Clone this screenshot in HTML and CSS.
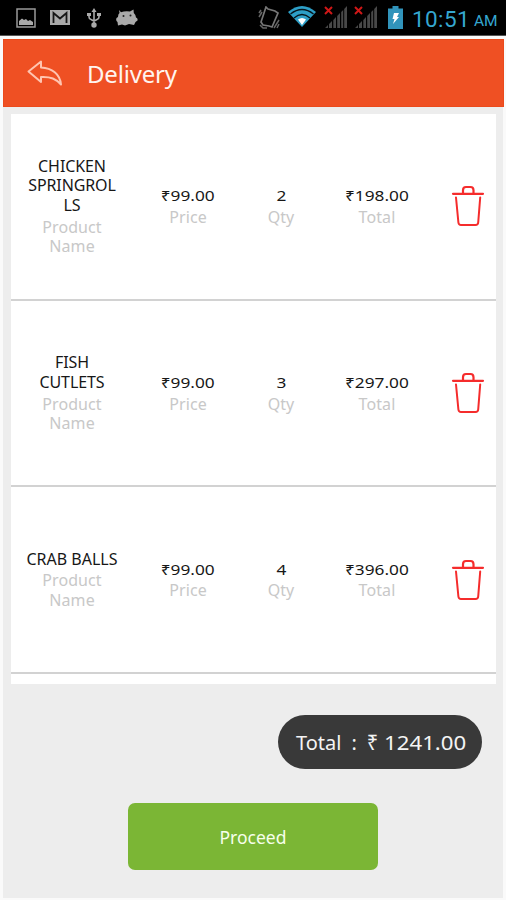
FILE: index.html
```html
<!DOCTYPE html>
<html lang="en">
<head>
<meta charset="utf-8">
<title>Delivery</title>
<link rel="stylesheet" href="styles.css">
</head>
<body>
<svg class="defs" aria-hidden="true">
  <symbol id="trash" viewBox="0 0 34 42">
    <path d="M2 8.8H32" stroke-width="2.2"/>
    <path d="M12 8V5.2Q12 2 15 2H19.5Q22.5 2 22.5 5.2V8" stroke-width="2.2"/>
    <path d="M5 12.5L7.4 37.5Q7.7 40 10 40H24.5Q27 40 27.2 37.5L29.2 12.5" stroke-width="2"/>
  </symbol>
  <symbol id="signal" viewBox="0 0 24 24">
    <path d="M1 22L4 19V22ZM5 18L8 15V22H5ZM9.3 14L12 11V22H9.3ZM13.2 10L16 7V22H13.2ZM17.2 6L19.2 4V22H17.2ZM20.2 3L23 0V22H20.2Z" fill="#484848"/>
    <path d="M1 1L8 8M8 1L1 8" stroke="#cf1717" stroke-width="2"/>
  </symbol>
</svg>
<div class="status">
  <svg class="s-image" viewBox="0 0 20 20"><path d="M1 1H19V19H1Z" fill="none" stroke="#999" stroke-width="1.5"/><path d="M3 17V13L6 10.5L8 12L10 11L12 13L14 12L17 14V17Z" fill="#aaa"/></svg>
  <svg class="s-mail" viewBox="0 0 20 15"><path d="M0 0H20V15H0Z" fill="#aaa"/><path d="M3.5 13V3L10 8.5L16.5 3V13" fill="none" stroke="#171717" stroke-width="1.8"/></svg>
  <svg class="s-usb" viewBox="0 0 14 20"><path d="M7 2V17M2 6V9Q2 11 4 11.5L7 13L10 11.5Q12 11 12 9V6" fill="none" stroke="#aaa" stroke-width="1.6"/><path d="M7 0L9.5 4H4.5Z" fill="#aaa"/><path d="M0 5H4V8H0ZM10 5H14V8H10Z" fill="#aaa"/><circle cx="7" cy="17" r="2.7" fill="#aaa"/></svg>
  <svg class="s-bug" viewBox="0 0 22 18"><path d="M3 1L5 3.2Q9 1.8 14 2.5L17.5 .5L17.8 4Q20 6 20 8.5Q22 9 21.5 11.5L19.5 13L18 16L13 15L9 16.5L6 15.5L2 16.5L1.5 13Q-.5 12 .5 9L2 8Q2 5 3.5 4Z" fill="#aaa"/><circle cx="7.5" cy="7" r="1" fill="#222"/><circle cx="14.5" cy="6.5" r="1" fill="#222"/></svg>
  <span class="grow"></span>
  <svg class="s-vibe" viewBox="0 0 22 24"><path d="M8 1L10 3L17 5L20 7L14 21L11 20L5 19L3 16Z" fill="none" stroke="#777" stroke-width="1.7"/><path d="M1 7L3 4M1 11L4 6M16 22L21 14M19 22L21 18M2 19L5 22L9 22" fill="none" stroke="#666" stroke-width="1.5"/></svg>
  <svg class="s-wifi" viewBox="0 0 28 21"><path d="M0 6Q14-6 28 6L14 21Z" fill="#2d9fc7"/><path d="M2.5 8Q14-1 25.5 8M6 12Q14 5 22 12" fill="none" stroke="#06151c" stroke-width="1.3"/><path d="M10 13.5Q14 10.5 18 13.5L14 19Z" fill="#fff"/></svg>
  <svg class="s-signal"><use href="#signal"/></svg>
  <svg class="s-signal second"><use href="#signal"/></svg>
  <svg class="s-battery" viewBox="0 0 15 23"><path d="M4.5 0H10.5V2.5H15V23H0V2.5H4.5Z" fill="#3194bb"/><path d="M6 7H11L9 11H11L5 18L6.5 13H4.5Z" fill="#fff"/></svg>
  <span class="clock">10:51</span><span class="ampm">AM</span>
</div>
<div class="app">
  <header class="bar">
    <svg class="back" viewBox="0 0 36 27"><path d="M1.5 11.5L14 1.5V7.5C25 8 33 14 34 24.5C29 19 24 16.5 14 17V22Z"/></svg>
    <h1>Delivery</h1>
  </header>
  <main class="list">
    <section class="row">
      <div class="name">CHICKEN<br>SPRINGROL<br>LS<small>Product<br>Name</small></div>
      <div><b>₹99.00</b><small>Price</small></div>
      <div><b>2</b><small>Qty</small></div>
      <div><b>₹198.00</b><small>Total</small></div>
      <svg class="trash"><use href="#trash"/></svg>
    </section>
    <section class="row">
      <div class="name">FISH<br>CUTLETS<small>Product<br>Name</small></div>
      <div><b>₹99.00</b><small>Price</small></div>
      <div><b>3</b><small>Qty</small></div>
      <div><b>₹297.00</b><small>Total</small></div>
      <svg class="trash"><use href="#trash"/></svg>
    </section>
    <section class="row">
      <div class="name crab">CRAB BALLS<small>Product<br>Name</small></div>
      <div><b>₹99.00</b><small>Price</small></div>
      <div><b>4</b><small>Qty</small></div>
      <div><b>₹396.00</b><small>Total</small></div>
      <svg class="trash"><use href="#trash"/></svg>
    </section>
  </main>
  <footer>
    <div class="total"><span>Total</span><span>:</span><span class="rupee">₹</span><span class="sum">1241.00</span></div>
    <button>Proceed</button>
  </footer>
</div>
</body>
</html>
```

FILE: styles.css
```css
* { box-sizing: border-box; }
body { margin: 0; width: 506px; height: 900px; overflow: hidden; background: #fafafa; font-family: "Noto Sans", sans-serif; }
svg { display: block; flex: none; }
.defs { position: absolute; width: 0; height: 0; }
.status { height: 36px; background: #000; border-bottom: 1px solid #555; display: flex; align-items: center; padding: 0 7px 0 16px; }
.s-image { width: 20px; height: 20px; }
.s-mail { width: 20px; height: 15px; margin-left: 14px; }
.s-usb { width: 14px; height: 20px; margin-left: 17px; }
.s-bug { width: 22px; height: 18px; margin-left: 15px; }
.grow { flex: 1; }
.s-vibe { width: 22px; height: 24px; }
.s-wifi { width: 28px; height: 21px; margin-left: 8px; margin-top: -2px; }
.s-signal { width: 24px; height: 24px; margin-left: 8px; }
.s-signal.second { margin-left: 6px; }
.s-battery { width: 15px; height: 23px; margin-left: 10px; }
.clock, .ampm { font-family: Roboto, sans-serif; color: #35a7d0; }
.clock { width: 59px; margin-left: 9px; font-size: 22.5px; line-height: 36px; letter-spacing: .4px; padding-top: 2px; }
.ampm { width: 25px; margin-left: 3px; font-size: 15.5px; padding-top: 6px; }
.app { height: 859px; margin: 3px 3px 0; background: #ededed; display: flex; flex-direction: column; }
.bar { height: 68px; margin-right: -1px; background: #ef5023; border: 1px solid #eb4a1c; display: flex; align-items: center; padding-left: 23px; }
.back { width: 36px; height: 27px; }
.back path { fill: none; stroke: #ffc4b0; stroke-width: 2; stroke-linejoin: round; }
h1 { margin: 2px 0 0 24px; color: #fff4ef; font-size: 24px; font-weight: 400; line-height: 34px; letter-spacing: -.2px; }
.list { height: 570px; margin: 7px 7px 0 8px; background: #fff; }
.row { height: 186.7px; border-bottom: 2px solid #d2d2d2; display: grid; grid-template-columns: 122px 110px 76px 116px 61px; align-items: center; justify-items: center; text-align: center; font-size: 16px; line-height: 19.6px; color: #171717; }
.row .name { font-size: 16px; letter-spacing: -.1px; padding-top: 1px; }
.row small { display: block; margin-top: 2px; font-size: 16px; color: #c8c8c8; letter-spacing: .1px; }
.row > div:not(.name) { padding-top: 1px; }
.row b { display: block; font-size: 14.5px; font-weight: 400; transform: scaleX(1.19); }
.row .crab { white-space: nowrap; letter-spacing: 0; }
.trash { width: 34px; height: 42px; margin-left: 5px; fill: none; stroke: #f52c2c; stroke-linecap: round; stroke-linejoin: round; }
footer { flex: 1; display: flex; flex-direction: column; }
.total { align-self: flex-end; width: 204px; height: 54px; margin: 31px 21px 0 0; border-radius: 27px; background: #393939; color: #f4f4f4; font-size: 20px; line-height: 56px; display: flex; padding-left: 18px; }
.total span + span { margin-left: 10px; }
.total .rupee { font-size: 20px; }
.total span.sum { margin-left: 6px; font-size: 19px; transform: scaleX(1.17); transform-origin: left; }
button { width: 250px; height: 67px; margin: 34px 0 0 125px; padding: 0; border: 0; border-radius: 7px; background: #7bb635; color: #f6ffeb; font: 17.5px "Noto Sans", sans-serif; }
```
